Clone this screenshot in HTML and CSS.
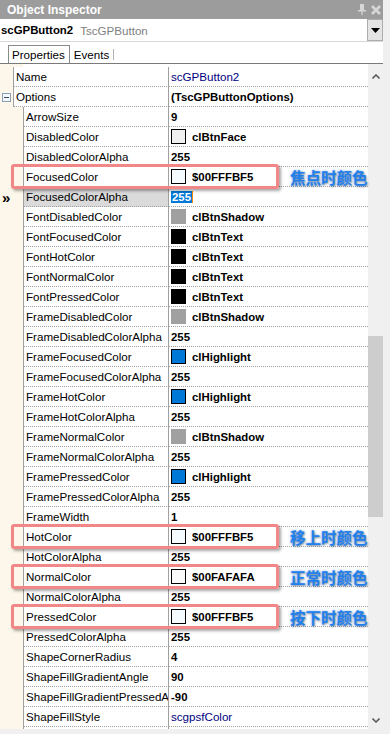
FILE: index.html
```html
<!DOCTYPE html>
<html lang="en">
<head>
    <meta charset="UTF-8">
    <meta name="viewport" content="width=device-width, initial-scale=1.0">
    <title>Object Inspector</title>
    <link rel="stylesheet" href="styles.css">
</head>
<body>
    <div class="inspector">
        <div class="titlebar">
            <span>Object Inspector</span>
            <span class="tb-icons">
                <svg width="8" height="11" viewBox="0 0 8 11"><path d="M0 6h8v1.5H0z M2 0h4v6H2z M3.4 7h1.2v4H3.4z" fill="#d6d6d6"/></svg>
                <svg width="10" height="10" viewBox="0 0 10 10"><path d="M1 1l8 8M9 1l-8 8" stroke="#d6d6d6" stroke-width="2.6"/></svg>
            </span>
        </div>
        <div class="combo">
            <span class="obj-name">scGPButton2</span>
            <span class="obj-type">TscGPButton</span>
            <span class="combo-btn"><svg width="9" height="5" viewBox="0 0 9 5"><path d="M0 0h9L4.5 5z" fill="#000"/></svg></span>
        </div>
        <div class="tabs">
            <span class="tab active">Properties</span>
            <span class="tab">Events</span>
        </div>
        <div class="grid-wrap">
            <div class="grid">
                <div class="row top"><div class="gut"></div><div class="name">Name</div><div class="val link">scGPButton2</div></div>
                <div class="row top"><div class="gut"><i class="collapse"></i></div><div class="name">Options</div><div class="val"><b>(TscGPButtonOptions)</b></div></div>
                <div class="row"><div class="gut"></div><div class="name">ArrowSize</div><div class="val"><b>9</b></div></div>
                <div class="row"><div class="gut"></div><div class="name">DisabledColor</div><div class="val"><i class="sw sw-face"></i><b>clBtnFace</b></div></div>
                <div class="row"><div class="gut"></div><div class="name">DisabledColorAlpha</div><div class="val"><b>255</b></div></div>
                <div class="row"><div class="gut"></div><div class="name">FocusedColor</div><div class="val"><i class="sw sw-bf5"></i><b>$00FFFBF5</b></div>
                    <span class="mark"></span><span class="note">焦点时颜色</span></div>
                <div class="row selected"><div class="gut">»</div><div class="name">FocusedColorAlpha</div><div class="val"><b class="edit">255</b></div></div>
                <div class="row"><div class="gut"></div><div class="name">FontDisabledColor</div><div class="val"><i class="sw sw-shadow"></i><b>clBtnShadow</b></div></div>
                <div class="row"><div class="gut"></div><div class="name">FontFocusedColor</div><div class="val"><i class="sw sw-text"></i><b>clBtnText</b></div></div>
                <div class="row"><div class="gut"></div><div class="name">FontHotColor</div><div class="val"><i class="sw sw-text"></i><b>clBtnText</b></div></div>
                <div class="row"><div class="gut"></div><div class="name">FontNormalColor</div><div class="val"><i class="sw sw-text"></i><b>clBtnText</b></div></div>
                <div class="row"><div class="gut"></div><div class="name">FontPressedColor</div><div class="val"><i class="sw sw-text"></i><b>clBtnText</b></div></div>
                <div class="row"><div class="gut"></div><div class="name">FrameDisabledColor</div><div class="val"><i class="sw sw-shadow"></i><b>clBtnShadow</b></div></div>
                <div class="row"><div class="gut"></div><div class="name">FrameDisabledColorAlpha</div><div class="val"><b>255</b></div></div>
                <div class="row"><div class="gut"></div><div class="name">FrameFocusedColor</div><div class="val"><i class="sw sw-hl"></i><b>clHighlight</b></div></div>
                <div class="row"><div class="gut"></div><div class="name">FrameFocusedColorAlpha</div><div class="val"><b>255</b></div></div>
                <div class="row"><div class="gut"></div><div class="name">FrameHotColor</div><div class="val"><i class="sw sw-hl"></i><b>clHighlight</b></div></div>
                <div class="row"><div class="gut"></div><div class="name">FrameHotColorAlpha</div><div class="val"><b>255</b></div></div>
                <div class="row"><div class="gut"></div><div class="name">FrameNormalColor</div><div class="val"><i class="sw sw-shadow"></i><b>clBtnShadow</b></div></div>
                <div class="row"><div class="gut"></div><div class="name">FrameNormalColorAlpha</div><div class="val"><b>255</b></div></div>
                <div class="row"><div class="gut"></div><div class="name">FramePressedColor</div><div class="val"><i class="sw sw-hl"></i><b>clHighlight</b></div></div>
                <div class="row"><div class="gut"></div><div class="name">FramePressedColorAlpha</div><div class="val"><b>255</b></div></div>
                <div class="row"><div class="gut"></div><div class="name">FrameWidth</div><div class="val"><b>1</b></div></div>
                <div class="row"><div class="gut"></div><div class="name">HotColor</div><div class="val"><i class="sw sw-bf5"></i><b>$00FFFBF5</b></div>
                    <span class="mark"></span><span class="note">移上时颜色</span></div>
                <div class="row"><div class="gut"></div><div class="name">HotColorAlpha</div><div class="val"><b>255</b></div></div>
                <div class="row"><div class="gut"></div><div class="name">NormalColor</div><div class="val"><i class="sw sw-afa"></i><b>$00FAFAFA</b></div>
                    <span class="mark"></span><span class="note">正常时颜色</span></div>
                <div class="row"><div class="gut"></div><div class="name">NormalColorAlpha</div><div class="val"><b>255</b></div></div>
                <div class="row"><div class="gut"></div><div class="name">PressedColor</div><div class="val"><i class="sw sw-bf5"></i><b>$00FFFBF5</b></div>
                    <span class="mark"></span><span class="note">按下时颜色</span></div>
                <div class="row"><div class="gut"></div><div class="name">PressedColorAlpha</div><div class="val"><b>255</b></div></div>
                <div class="row"><div class="gut"></div><div class="name">ShapeCornerRadius</div><div class="val"><b>4</b></div></div>
                <div class="row"><div class="gut"></div><div class="name">ShapeFillGradientAngle</div><div class="val"><b>90</b></div></div>
                <div class="row"><div class="gut"></div><div class="name"><span class="clip">ShapeFillGradientPressedAngle</span></div><div class="val"><b>-90</b></div></div>
                <div class="row"><div class="gut"></div><div class="name">ShapeFillStyle</div><div class="val link">scgpsfColor</div></div>
                <div class="row"><div class="gut"></div><div class="name"></div><div class="val"></div></div>
            </div>
            <div class="scrollbar">
                <span class="sb-btn up"><svg width="8" height="5" viewBox="0 0 8 5"><path d="M0.5 4.5L4 1l3.5 3.5" fill="none" stroke="#606060" stroke-width="1.6"/></svg></span>
                <span class="sb-track"><span class="sb-thumb"></span></span>
                <span class="sb-btn down"><svg width="8" height="5" viewBox="0 0 8 5"><path d="M0.5 0.5L4 4l3.5-3.5" fill="none" stroke="#606060" stroke-width="1.6"/></svg></span>
            </div>
        </div>
    </div>
</body>
</html>
```

FILE: styles.css
```css
body {
    margin: 0;
    background: #f0f0f0;
    font-family: "Liberation Sans", Arial, sans-serif;
    font-size: 11.6px;
    color: #000;
}

.inspector {
    width: 383px;
}

.titlebar {
    height: 19px;
    background: #9c9c9c;
    color: #fff;
    font-weight: bold;
    font-size: 12px;
    display: flex;
    align-items: center;
    justify-content: space-between;
    padding-left: 7px;
    box-sizing: border-box;
}

.tb-icons {
    display: flex;
    align-items: center;
    gap: 5px;
    padding-right: 2px;
}

.combo {
    height: 23px;
    background: #fff;
    border-bottom: 1px solid #d8d8d8;
    box-sizing: border-box;
    display: flex;
    align-items: center;
    padding-left: 1px;
}

.obj-name {
    font-weight: bold;
    font-size: 11.4px;
}

.obj-type {
    color: #808080;
    margin-left: 7px;
    font-size: 11.6px;
}

.combo-btn {
    margin-left: auto;
    width: 16px;
    height: 22px;
    background: #e4e4e4;
    border: 1px solid #adadad;
    box-sizing: border-box;
    display: flex;
    align-items: center;
    justify-content: center;
    align-self: flex-start;
}

.tabs {
    height: 22px;
    background: #fff;
    border-bottom: 1px solid #7a7a7a;
    box-sizing: border-box;
    display: flex;
    align-items: flex-end;
    padding-left: 8px;
}

.tab {
    height: 18px;
    line-height: 17px;
    padding: 0 4px;
    box-sizing: border-box;
}

.tab.active {
    border: 1px solid #8a8a8a;
    border-bottom: none;
    padding: 0 4px 0 3px;
}

.tab:last-child {
    padding-right: 4px;
    border-right: 1px solid #b0b0b0;
    height: 11px;
    line-height: 11px;
    margin-bottom: 3px;
}

.grid-wrap {
    height: 665px;
    display: flex;
    overflow: hidden;
}

.grid {
    width: 368px;
    padding-top: 3px;
    background: linear-gradient(90deg, #fcf7ea 0 23px, #fff 23px);
}

.row {
    display: grid;
    grid-template-columns: 24px 145px 1fr;
    height: 20px;
    position: relative;
}

.row.top {
    grid-template-columns: 14px 155px 1fr;
}

.gut {
    background: #fcf7ea;
    border-right: 1px solid #a0a0a0;
    display: flex;
    align-items: center;
    justify-content: center;
    font-weight: bold;
    font-size: 15px;
}

.name,
.val {
    border-bottom: 1px dotted #a0a0a0;
    display: flex;
    align-items: center;
    white-space: nowrap;
    overflow: hidden;
    background: #fff;
}

.name {
    border-right: 1px solid #a0a0a0;
    padding-left: 2px;
}

.clip {
    display: block;
    width: 142px;
    overflow: hidden;
}

.val {
    padding-left: 2px;
}

.val b {
    font-size: 11.4px;
}

.link {
    color: #000080;
}

.collapse {
    width: 7px;
    height: 7px;
    border: 1px solid #8aa0b8;
    background: #f4f7fb;
    position: relative;
}

.collapse::after {
    content: "";
    position: absolute;
    left: 1px;
    right: 1px;
    top: 3px;
    height: 1px;
    background: #3a4a5a;
}

.sw {
    width: 15px;
    height: 15px;
    border: 1px solid #000;
    box-sizing: border-box;
    margin-right: 6px;
    flex-shrink: 0;
}

.sw-face { background: #f0f0f0; }
.sw-bf5 { background: #f5fbff; }
.sw-afa { background: #fafafa; }
.sw-text { background: #000; }
.sw-hl { background: #0078d7; }
.sw-shadow { background: #a0a0a0; border-color: #a0a0a0; }

.selected .name {
    background: #dadada;
}

.selected .gut {
    justify-content: flex-start;
    padding-left: 2px;
    line-height: 1;
}

.edit {
    background: #0078d7;
    color: #fff;
    padding: 0 1px;
    border-right: 1px solid #ff8a00;
}

.mark {
    position: absolute;
    left: 11px;
    top: -3px;
    width: 268px;
    height: 25px;
    box-sizing: border-box;
    border: 3px solid #f28787;
    border-radius: 3px;
    box-shadow: 2px 2px 3px rgba(0, 0, 0, 0.35);
    z-index: 2;
}

.note {
    position: absolute;
    left: 290px;
    top: 0;
    height: 20px;
    line-height: 20px;
    font-family: "Noto Sans CJK SC", sans-serif;
    font-weight: bold;
    font-size: 15.5px;
    color: #1f80ee;
    text-shadow: 1px 1px 2px rgba(0, 0, 0, 0.35), 0 0 3px rgba(130, 175, 235, 0.9);
    white-space: nowrap;
    z-index: 2;
}

.scrollbar {
    width: 15px;
    display: flex;
    flex-direction: column;
    background: #f0f0f0;
}

.sb-btn {
    display: flex;
    align-items: center;
    justify-content: center;
}

.sb-btn.up {
    height: 24px;
}

.sb-btn.down {
    height: 18px;
}

.sb-track {
    flex: 1;
}

.sb-thumb {
    display: block;
    margin-top: 248px;
    height: 181px;
    background: #cdcdcd;
}
```
